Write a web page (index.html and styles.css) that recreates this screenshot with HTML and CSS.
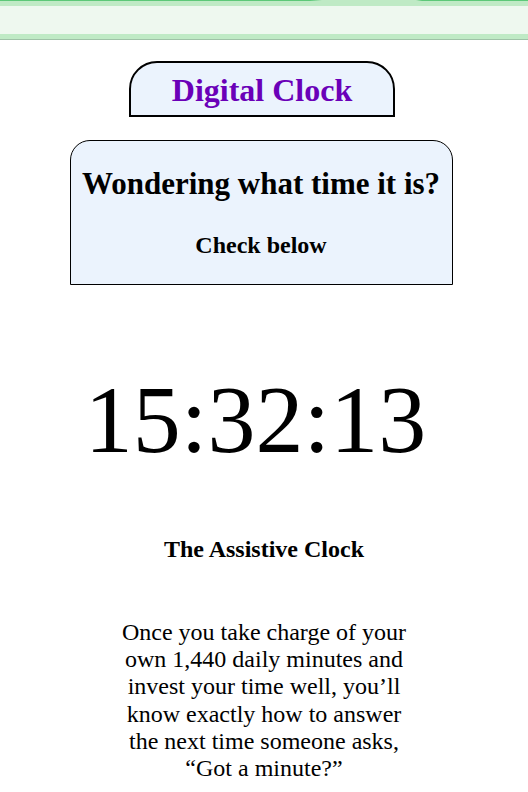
FILE: index.html
```html
<!DOCTYPE html>
<html lang="en">
<head>
<meta charset="utf-8">
<title>Digital Clock</title>
<link rel="stylesheet" href="styles.css">
</head>
<body>
<div class="topbar">
  <div class="progress"><span class="seg seg-left"></span><span class="seg seg-right"></span></div>
  <div class="topbar-inner"></div>
</div>
<main class="page">
  <h1 class="title-box">Digital Clock</h1>
  <section class="intro-box">
    <h2 class="intro-heading">Wondering what time it is?</h2>
    <h3 class="intro-sub">Check below</h3>
  </section>
  <div class="clock">15:32:13</div>
  <h4 class="subtitle">The Assistive Clock</h4>
  <p class="quote">Once you take charge of your own 1,440 daily minutes and invest your time well, you’ll know exactly how to answer the next time someone asks, “Got a minute?”</p>
</main>
</body>
</html>
```

FILE: styles.css
```css
html, body {
  margin: 0;
  padding: 0;
  background: #ffffff;
  font-family: "Liberation Serif", "Times New Roman", serif;
  color: #000;
}

.topbar {
  background: #bfeac5;
  padding-bottom: 5px;
  border-bottom: 1px solid #9fc2a7;
}

.progress {
  height: 1px;
  display: flex;
  justify-content: space-between;
  margin-bottom: 5px;
}

.seg {
  display: block;
  height: 1px;
  background: #5cc878;
}

.seg-left {
  width: 322px;
  background: linear-gradient(to right, #5cc878 0, #5cc878 310px, #bfeac5 322px);
}

.seg-right {
  width: 112px;
  background: linear-gradient(to right, #bfeac5 0, #5cc878 6px, #5cc878 100%);
}

.topbar-inner {
  height: 28px;
  background: #eef8ef;
}

.page {
  display: flex;
  flex-direction: column;
  align-items: center;
}

.title-box {
  margin: 21px 4px 0 0;
  width: 262px;
  height: 52px;
  box-sizing: content-box;
  border: 2px solid #000;
  border-radius: 28px 28px 0 0;
  background: #ebf3fd;
  color: #6a00b8;
  font-size: 32px;
  font-weight: bold;
  line-height: 54px;
  text-align: center;
}

.intro-box {
  margin: 23px 6px 0 0;
  width: 381px;
  border: 1px solid #000;
  border-radius: 20px 20px 0 0;
  background: #ebf3fd;
  padding: 25px 0 25px;
  text-align: center;
}

.intro-heading {
  margin: 0;
  font-size: 31px;
  line-height: 36px;
  font-weight: bold;
}

.intro-sub {
  margin: 29px 0 0;
  font-size: 24px;
  line-height: 28px;
  font-weight: bold;
}

.clock {
  margin-top: 80px;
  padding-right: 17px;
  font-size: 96px;
  line-height: 110px;
}

.subtitle {
  margin: 60px 0 0;
  font-size: 24px;
  line-height: 28px;
  font-weight: bold;
}

.quote {
  margin: 56px 0 0;
  width: 300px;
  font-size: 24px;
  line-height: 27.2px;
  text-align: center;
}
```
